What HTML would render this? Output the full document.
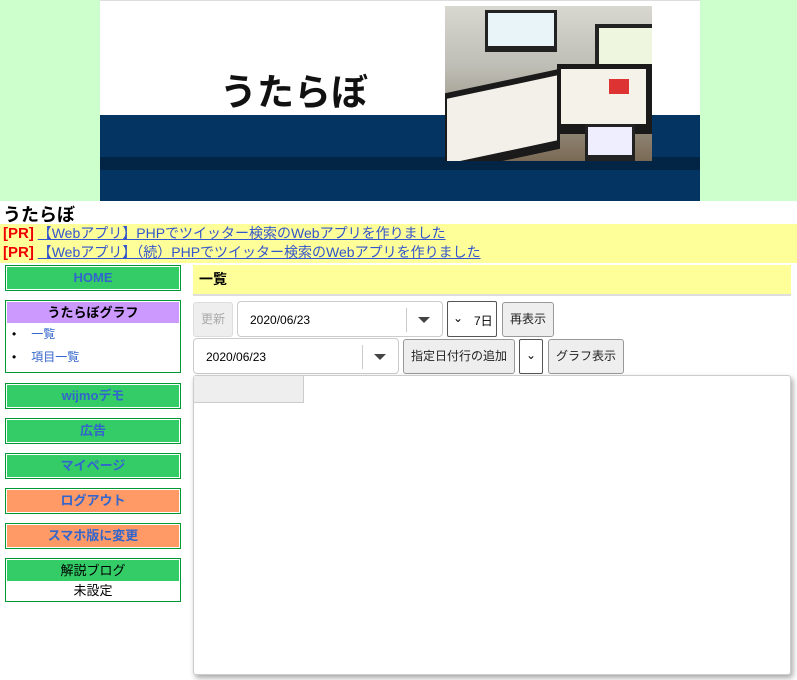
<!DOCTYPE html>
<html><head><meta charset="utf-8"><style>
*{box-sizing:border-box;margin:0;padding:0}
body{width:797px;height:680px;overflow:hidden;background:#fff;font-family:"Liberation Sans","Noto Sans CJK JP",sans-serif;position:relative}
.a{position:absolute}
.nav{position:absolute;left:5px;width:176px;height:26px;border:1px solid #009933;padding:1px}
.nav div{width:100%;height:100%;border:0;color:#3366cc;font-weight:bold;font-size:13px;text-align:center;line-height:22px}
.g{background:#33cc66}.o{background:#ff9966}
.btn{position:absolute;background:#eee;border:1px solid #999;border-radius:3px;font-size:12px;text-align:center;color:#222}
.inp{position:absolute;background:#fff;border:1px solid #ccc;border-radius:4px;font-size:12px}
.tri{position:absolute;width:0;height:0;border-left:6px solid transparent;border-right:6px solid transparent;border-top:6px solid #444}
</style></head><body>
<div class="a" style="left:0;top:0;width:797px;height:201px;background:#ccffcc"></div>
<div class="a" style="left:100px;top:0;width:600px;height:201px;background:#fff;border-top:1px solid #ddd"></div>
<div class="a" style="left:100px;top:115px;width:600px;height:86px;background:#033462"></div>
<div class="a" style="left:100px;top:157px;width:600px;height:13px;background:#022545"></div>
<div class="a" style="left:220px;top:62px;font-size:37px;font-weight:bold;color:#111">うたらぼ</div>
<div class="a" style="left:445px;top:6px;width:207px;height:155px;background:linear-gradient(#d8d8d0,#bdbdb5 40%,#7a6a55);overflow:hidden">
 <div class="a" style="left:40px;top:4px;width:72px;height:42px;background:#222"><div class="a" style="left:3px;top:3px;width:66px;height:33px;background:#e8f4f8"></div></div>
 <div class="a" style="left:150px;top:18px;width:57px;height:55px;background:#222"><div class="a" style="left:4px;top:4px;width:53px;height:44px;background:#eef6e0"></div></div>
 <div class="a" style="left:0;top:75px;width:115px;height:80px;background:#1a1a1a;transform:skewY(-12deg)"><div class="a" style="left:2px;top:6px;width:110px;height:65px;background:#f3f0ea"></div></div>
 <div class="a" style="left:112px;top:58px;width:95px;height:70px;background:#1a1a1a"><div class="a" style="left:4px;top:5px;width:85px;height:55px;background:#f5f2ea"></div><div class="a" style="left:52px;top:15px;width:20px;height:15px;background:#d33"></div></div>
 <div class="a" style="left:140px;top:118px;width:50px;height:37px;background:#222"><div class="a" style="left:3px;top:3px;width:44px;height:28px;background:#eef"></div></div>
</div>
<div class="a" style="left:3px;top:201px;font-size:18px;font-weight:bold;color:#000">うたらぼ</div>
<div class="a" style="left:0;top:224px;width:797px;height:39px;background:#ffff99"></div>
<div class="a" style="left:3px;top:224px;font-size:14px;line-height:19px;white-space:nowrap"><b style="color:#e00;font-size:15px">[PR]</b> <span style="color:#3355cc;text-decoration:underline">【Webアプリ】PHPでツイッター検索のWebアプリを作りました</span><br><b style="color:#e00;font-size:15px">[PR]</b> <span style="color:#3355cc;text-decoration:underline">【Webアプリ】（続）PHPでツイッター検索のWebアプリを作りました</span></div>

<div class="nav" style="top:265px"><div class="g">HOME</div></div>
<div class="a" style="left:5px;top:300px;width:176px;height:73px;border:1px solid #009933;padding:1px">
 <div style="background:#cc99ff;height:21px;text-align:center;font-size:13px;font-weight:bold;line-height:21px">うたらぼグラフ</div>
 <div style="font-size:12px;color:#3366cc;line-height:23px;padding-left:5px"><span style="color:#000">•</span><span style="margin-left:15px">一覧</span><br><span style="color:#000">•</span><span style="margin-left:15px">項目一覧</span></div>
</div>
<div class="nav" style="top:383px"><div class="g">wijmoデモ</div></div>
<div class="nav" style="top:418px"><div class="g">広告</div></div>
<div class="nav" style="top:453px"><div class="g">マイページ</div></div>
<div class="nav" style="top:488px"><div class="o">ログアウト</div></div>
<div class="nav" style="top:523px"><div class="o">スマホ版に変更</div></div>
<div class="a" style="left:5px;top:558px;width:176px;height:44px;border:1px solid #009933;padding:1px;font-size:13px;text-align:center">
 <div style="background:#33cc66;height:21px;line-height:21px">解説ブログ</div><div style="line-height:19px">未設定</div></div>

<div class="a" style="left:193px;top:265px;width:598px;height:31px;background:#ffff99;border-bottom:2px solid #ddd;font-size:14px;font-weight:bold;line-height:29px;padding-left:6px">一覧</div>
<div class="btn" style="left:193px;top:302px;width:40px;height:35px;line-height:33px;color:#aaa;border-color:#ddd">更新</div>
<div class="inp" style="left:237px;top:301px;width:206px;height:36px"><span class="a" style="left:12px;top:11px">2020/06/23</span><div class="a" style="left:168px;top:6px;width:1px;height:24px;background:#ccc"></div><div class="tri" style="left:180px;top:15px"></div></div>
<div class="inp" style="left:447px;top:301px;width:50px;height:36px;border-color:#555;border-radius:2px"><span class="a" style="left:5px;top:9px;font-size:12px">⌄</span><span class="a" style="left:26px;top:10px">7日</span></div>
<div class="btn" style="left:502px;top:302px;width:52px;height:35px;line-height:33px">再表示</div>
<div class="inp" style="left:193px;top:338px;width:206px;height:36px"><span class="a" style="left:12px;top:11px">2020/06/23</span><div class="a" style="left:168px;top:6px;width:1px;height:24px;background:#ccc"></div><div class="tri" style="left:180px;top:15px"></div></div>
<div class="btn" style="left:403px;top:339px;width:112px;height:35px;line-height:33px">指定日付行の追加</div>
<div class="inp" style="left:519px;top:339px;width:24px;height:35px;border-color:#555;border-radius:2px"><span class="a" style="left:6px;top:8px">⌄</span></div>
<div class="btn" style="left:548px;top:339px;width:76px;height:35px;line-height:33px">グラフ表示</div>
<div class="a" style="left:193px;top:375px;width:598px;height:300px;background:#fff;border:1px solid #ccc;border-radius:3px;box-shadow:2px 3px 6px rgba(0,0,0,.35)">
 <div class="a" style="left:0;top:0;width:110px;height:27px;background:#eee;border-right:1px solid #ccc;border-bottom:1px solid #ccc"></div></div>
</body></html>
